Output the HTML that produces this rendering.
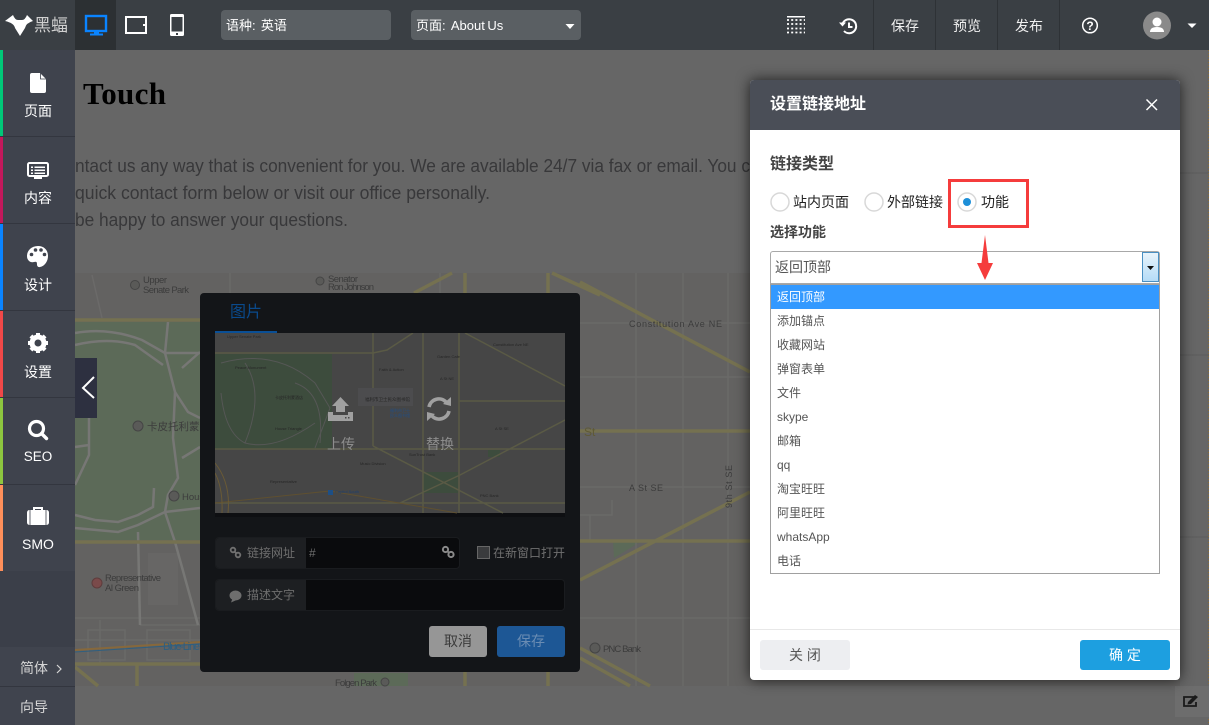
<!DOCTYPE html>
<html><head><meta charset="utf-8"><title>Editor</title>
<style>
*{box-sizing:border-box}
html,body{margin:0;padding:0;width:1209px;height:725px;overflow:hidden;background:#666;font-family:"Liberation Sans","Noto Sans CJK SC",sans-serif}
.a{position:absolute}
.t{position:absolute;white-space:nowrap;line-height:1}
#top{left:0;top:0;width:1209px;height:50px;background:#3a3f44}
.sel{background:#5a5f63;border-radius:4px;height:30px;width:170px;top:10px;color:#fff;font-size:13px;line-height:31px;padding-left:5px;white-space:pre;word-spacing:-1px}
.sep{top:0;width:1px;height:50px;background:#2e3236}
.tb{color:#f0f0f0;font-size:14px;top:19px}
.side{left:0;width:75px;background:#3f434d;border-bottom:1px solid #33363f;height:87px}
.side i{position:absolute;left:0;top:0;width:3px;height:100%}
.side span{position:absolute;left:2px;width:72px;text-align:center;color:#fff;font-size:14px;line-height:1;white-space:nowrap}
.side svg{position:absolute}
.opt{height:24px;line-height:24px;padding-left:6px;font-size:12px;color:#555;white-space:nowrap}
</style></head>
<body>
<!-- page / map -->
<svg class="a" style="left:0;top:0" width="1209" height="725" font-family="Liberation Sans,Noto Sans CJK SC,sans-serif">
<rect width="1209" height="725" fill="#666"/>
<text x="83" y="104" font-family="Liberation Serif" font-weight="bold" font-size="31" fill="#000" textLength="83">Touch</text>
<g font-size="18" fill="#38383a">
<text x="75" y="172" textLength="675" lengthAdjust="spacingAndGlyphs">ntact us any way that is convenient for you. We are available 24/7 via fax or email. You c</text>
<text x="75" y="199" textLength="415" lengthAdjust="spacingAndGlyphs">quick contact form below or visit our office personally.</text>
<text x="75" y="226" textLength="273" lengthAdjust="spacingAndGlyphs">be happy to answer your questions.</text>
</g>
<path d="M1180 173H1209M1180 355H1209M1180 537H1209" stroke="#5c5c5c"/>
<rect x="75" y="273" width="1105" height="413" fill="#636261"/>
<path d="M75 322H360V540H75Z" fill="#5c6a58"/>
<path d="M613 542H640L614 558Z" fill="#5c6a58"/>
<rect x="148" y="553" width="30" height="52" fill="#676665"/>
<g fill="none" stroke="#6b6a69" stroke-width="1.500">
<path d="M636 273V686M683 273V686M728 273V686M580 323H750M580 377H750M580 487H750M580 618H750"/>
<path d="M580 515H612V500M590 515V541M75 618H200M75 640H200M100 620V664M88 630H125V660H88ZM140 625H200M147 630H190V660H147Z"/>
<path d="M92 275L102 318M230 273V322M440 273V293"/>
</g>
<g fill="none" stroke="#777775" stroke-width="2.500">
<path d="M75 333Q108 327 142 340L165 353H200M75 345Q108 337 135 345L163 365M165 353L175 392L173 438L178 478L168 495L165 512L175 542L198 625M168 322L165 353"/>
<path d="M89 418V455L75 485M75 447L89 445M75 528L118 532L138 525L165 512L200 508M75 515L95 520L118 522L138 515L153 507L154 488M182 368L200 352M175 392L188 412L200 418M182 458L200 447M138 532L140 625"/>
</g>
<g fill="none" stroke="#757150" stroke-width="3.500">
<path d="M75 320H200M75 542H200M75 664H200M580 431H750M580 541H750M580 282L750 372M580 580L750 492M580 648L650 686M580 658L630 686M137 664V686M75 667L98 686M465 273V293M548 273V293M465 672V686M548 672V686M414 293L452 273M552 273L600 295"/>
</g>
<path d="M75 650L200 642" fill="none" stroke="#86683c" stroke-width="2"/>
<path d="M75 652L200 644" fill="none" stroke="#2f5f80" stroke-width="1"/>
<rect x="354" y="673" width="54" height="13" fill="#5c6a58"/>
<g font-size="9.500" fill="#3c3c3c">
<text x="163" y="650" fill="#2f5f80" font-size="11" textLength="37">Blue-Line</text>
<text x="143" y="283" textLength="24">Upper</text><text x="143" y="293" textLength="46">Senate Park</text>
<text x="328" y="282" textLength="30">Senator</text><text x="328" y="290" textLength="46">Ron Johnson</text>
<text x="147" y="430" font-size="10.500">卡皮托利蒙酒店</text>
<text x="182" y="500">House</text>
<text x="105" y="581" textLength="56">Representative</text><text x="105" y="591" textLength="34">Al Green</text>
<text x="629" y="327" font-size="9" textLength="93">Constitution Ave NE</text>
<text x="629" y="491" font-size="9" textLength="34">A St SE</text>
<text x="603" y="652" textLength="38">PNC Bank</text>
<text x="335" y="686" textLength="42">Folgen Park</text>
<text x="584" y="436" fill="#5f5a35" font-size="12">St</text>
<text transform="translate(732,508) rotate(-90)" font-size="9" textLength="43">9th St SE</text>
</g>
<g fill="#5a5a58" stroke="#454545" stroke-width="1"><circle cx="135" cy="285" r="4.500"/><circle cx="320" cy="281" r="4"/><circle cx="138" cy="426" r="5"/><circle cx="174" cy="496" r="5"/><circle cx="595" cy="648" r="5"/><circle cx="385" cy="682" r="4"/></g>
<circle cx="97" cy="583" r="5" fill="#7a4a4a" stroke="#5e3c3c"/>
<path d="M1208.500 50V725" stroke="#8a6a35" stroke-width="1" stroke-dasharray="1 2"/>
<rect x="1175" y="686" width="34" height="31" fill="#6d6d6d"/>
<path d="M1196 697h-12v9h12v-4" fill="none" stroke="#1a1a1a" stroke-width="1.800"/><path d="M1188 702l7-7 3 2-7 7-3.500 .5z" fill="#1a1a1a"/>
</svg>

<!-- image dialog -->
<div class="a" style="left:200px;top:293px;width:380px;height:379px;background:#131518;border-radius:4px"></div>
<div class="t" style="left:230px;top:305px;font-size:16px;color:#0a4a8c">图片</div>
<div class="a" style="left:215px;top:331px;width:62px;height:2px;background:#0a4f95"></div>
<svg class="a" style="left:215px;top:333px" width="350" height="184" font-family="Liberation Sans,Noto Sans CJK SC,sans-serif">
<rect width="350" height="184" fill="#0e0f12"/>
<rect width="350" height="180" fill="#464646"/>
<rect x="0" y="21" width="117" height="95" fill="#3d4c3d"/>
<rect x="208" y="139" width="35" height="21" fill="#3d4c3d"/>
<rect x="273" y="117" width="12" height="7" fill="#3d4c3d"/>
<g fill="none" stroke="#565756"><path d="M6 30Q60 15 100 50L115 75L100 115M6 60Q10 100 30 110Q60 118 100 90M30 30Q50 60 30 110M80 50Q110 60 105 110"/></g>
<g fill="none" stroke="#5a5a45" stroke-width="1.500"><path d="M0 20H158L172 17L198 0M0 116H350M158 0V113M208 0V180M244 0V180M250 0L350 53M244 68H350M350 87L245 142L185 170M158 113L288 180M0 170H350"/></g>
<path d="M0 170L115 158L242 180" stroke="#5f5030" fill="none"/>
<path d="M0 130Q16 150 13 180M0 140Q8 155 7 180" stroke="#6a5a35" fill="none"/>
<rect x="113" y="157" width="5" height="5" fill="#1d4f86"/>
<rect x="143" y="55" width="55" height="18" fill="#4c4c4e"/>
<g font-size="4" fill="#262626"><text x="278" y="13">Constitution Ave NE</text><text x="150" y="68" font-size="4.500">福利市卫士民众图书馆</text><text x="12" y="5">Upper Senate Park</text><text x="164" y="38">Faith &amp; Action</text><text x="222" y="25">Garden Cafe</text><text x="225" y="47">A St NE</text><text x="280" y="97">A St SE</text><text x="265" y="164">PNC Bank</text><text x="145" y="132">Music Division</text><text x="194" y="123">SunTrust Bank</text><text x="60" y="66">卡皮托利蒙酒店</text><text x="20" y="36">Peace Monument</text><text x="60" y="97">House Triangle</text><text x="55" y="150">Representative</text><text x="120" y="160" fill="#1d3f6e">Capitol South</text></g>
<g font-size="4" fill="#1f4f8a"><text x="175" y="79">福利市卫士</text><text x="175" y="84">民众图书馆</text></g>
<path d="M125.500 64L134 73H130V79H121V73H117Z" fill="#a0a0a0"/>
<path d="M113 79h5v3h15v-3h5v9H113z" fill="#a0a0a0"/><rect x="130" y="84" width="1.500" height="1.500" fill="#484848"/><rect x="133" y="84" width="1.500" height="1.500" fill="#484848"/>
<g fill="none" stroke="#a0a0a0" stroke-width="3.600"><path d="M214 74A10 10 0 0 1 231 69M234 78A10 10 0 0 1 217 83"/></g>
<path d="M228 71L236 64L236 73Z" fill="#a0a0a0"/><path d="M212 88L212 79L220 81Z" fill="#a0a0a0"/>
<text x="112" y="116" font-size="14" fill="#8d8d8d">上传</text>
<text x="211" y="116" font-size="14" fill="#8d8d8d">替换</text>
</svg>
<div class="a" style="left:215px;top:537px;width:245px;height:32px;background:#0a0b0d;border:1px solid #1a1c1f;border-radius:4px;overflow:hidden"><div style="width:90px;height:30px;background:#1d1f22"></div></div>
<div class="a" style="left:215px;top:579px;width:350px;height:32px;background:#0a0b0d;border:1px solid #1a1c1f;border-radius:4px;overflow:hidden"><div style="width:90px;height:30px;background:#1d1f22"></div></div>
<div class="t" style="left:247px;top:547px;font-size:12px;color:#6e6e6e">链接网址</div>
<div class="t" style="left:247px;top:589px;font-size:12px;color:#6e6e6e">描述文字</div>
<div class="t" style="left:309px;top:547px;font-size:12px;color:#6e6e6e">#</div>
<svg class="a" style="left:229px;top:546px" width="13" height="13" fill="none" stroke="#707070" stroke-width="1.800"><circle cx="4" cy="4" r="2.300"/><circle cx="9" cy="9" r="2.300"/><path d="M5.500 5.500l2 2"/></svg>
<svg class="a" style="left:441px;top:545px" width="15" height="14" fill="none" stroke="#8a8a8a" stroke-width="2"><circle cx="4.500" cy="4.500" r="2.600"/><circle cx="10" cy="9.500" r="2.600"/><path d="M6.500 6.500l2 1.500"/></svg>
<svg class="a" style="left:229px;top:590px" width="13" height="13"><ellipse cx="6.500" cy="5.500" rx="6" ry="5" fill="#6e6e6e"/><path d="M2 12.500l1.500-4 3 2z" fill="#6e6e6e"/></svg>
<div class="a" style="left:477px;top:546px;width:13px;height:13px;background:#3a3b3d;border:1px solid #666"></div>
<div class="t" style="left:493px;top:547px;font-size:12px;color:#707070">在新窗口打开</div>
<div class="a" style="left:429px;top:626px;width:58px;height:31px;background:#969696;border-radius:3px;color:#3c3c3c;font-size:14px;line-height:31px;text-align:center">取消</div>
<div class="a" style="left:497px;top:626px;width:68px;height:31px;background:#1d5795;border-radius:3px;color:#6a8cb3;font-size:14px;line-height:31px;text-align:center">保存</div>

<!-- collapse tab -->
<div class="a" style="left:75px;top:358px;width:22px;height:60px;background:#2d3040"></div>
<svg class="a" style="left:75px;top:358px" width="22" height="60" fill="none" stroke="#fff" stroke-width="2"><path d="M19 19L8 30l11 10"/></svg>

<!-- top bar -->
<div class="a" id="top"></div>
<div class="a" style="left:75px;top:0;width:41px;height:50px;background:#2c3033"></div>
<svg class="a" style="left:0;top:0" width="200" height="50">
<path d="M5 21L13 15Q15 20 18 20L22 20Q25 20 27 15L33 21Q26 23 25 28L20 36L15 28Q14 23 5 21Z" fill="#fff"/>
<g fill="none" stroke="#0a84ff"><rect x="86" y="16" width="20" height="15" stroke-width="2.400"/></g>
<rect x="94" y="32" width="5" height="2" fill="#0a84ff"/><rect x="90" y="33.500" width="13" height="2" fill="#0a84ff"/>
<rect x="126" y="17" width="20" height="16" fill="none" stroke="#fff" stroke-width="2"/><rect x="143" y="24" width="2" height="2" fill="#fff"/>
<path d="M171.500 14h11a1.500 1.500 0 0 1 1.500 1.500v19a1.500 1.500 0 0 1-1.500 1.500h-11a1.500 1.500 0 0 1-1.500-1.500v-19a1.500 1.500 0 0 1 1.500-1.500z" fill="#fff"/><rect x="171.500" y="17" width="11" height="14.500" fill="#3a3f44"/><rect x="176" y="33" width="2" height="2" fill="#3a3f44"/>
</svg>
<div class="t" style="left:34px;top:17px;font-size:17px;color:#d0d0d0">黑蝠</div>
<div class="a sel" style="left:221px">语种:  英语</div>
<div class="a sel" style="left:411px">页面:  About Us</div>
<svg class="a" style="left:560px;top:20px" width="16" height="10"><path d="M5.500 4h9l-4.500 5z" fill="#fff"/></svg>
<div class="a sep" style="left:873px"></div><div class="a sep" style="left:935px"></div><div class="a sep" style="left:997px"></div><div class="a sep" style="left:1059px"></div>
<div class="t tb" style="left:891px">保存</div><div class="t tb" style="left:953px">预览</div><div class="t tb" style="left:1015px">发布</div>
<svg class="a" style="left:780px;top:10px" width="90" height="30">
<rect x="7" y="6" width="18" height="1.500" fill="#fff"/>
<g fill="none" stroke="#fff" stroke-width="1.800" stroke-dasharray="2 2.200"><path d="M7 10h18M7 14h18M7 18.500h18M7 22.500h18"/></g>
<g fill="none" stroke="#fff" stroke-width="2"><path d="M62.500 14A7 7 0 1 1 64 21"/><path d="M69 12.500v4.500h3.500"/></g>
<path d="M59 12.500h7l-3.500 4z" fill="#fff"/>
</svg>
<svg class="a" style="left:1080px;top:15px" width="20" height="20"><circle cx="10" cy="10.500" r="7.300" fill="none" stroke="#fff" stroke-width="1.500"/><text x="10" y="15" text-anchor="middle" font-size="12" font-weight="bold" fill="#fff" font-family="Liberation Sans">?</text></svg>
<svg class="a" style="left:1143px;top:11px" width="58" height="30"><circle cx="14" cy="14.500" r="14" fill="#8a8a8a"/><circle cx="14" cy="11" r="4.500" fill="#fff"/><path d="M7 21q0-5 7-5t7 5z" fill="#fff"/><path d="M44.500 12.500h9l-4.500 4.500z" fill="#fff"/></svg>

<!-- sidebar -->
<div class="a" style="left:0;top:50px;width:75px;height:675px;background:#3b3f49"></div>
<div class="a side" style="top:50px"><i style="background:#00c878"></i>
<svg style="left:29px;top:22px" width="18" height="22"><path d="M3 1h8l6 6v12a2 2 0 0 1-2 2H3a2 2 0 0 1-2-2V3a2 2 0 0 1 2-2z" fill="#fff"/><path d="M11.500 1v6h5.500" fill="none" stroke="#3f434d" stroke-width=".8"/></svg>
<span style="top:54px">页面</span></div>
<div class="a side" style="top:137px"><i style="background:#c2185b"></i>
<svg style="left:26px;top:24px" width="24" height="20"><rect x="2" y="2" width="20" height="13" rx="1.500" fill="none" stroke="#fff" stroke-width="2"/><path d="M5 5.500h2v1.500H5zm3.500 0H19v1.500H8.500zM5 8.500h2v1.500H5zm3.500 0H19v1.500H8.500zM5 11.500h2v1.500H5zm3.500 0H19v1.500H8.500zM8 16h8v2H8z" fill="#fff"/></svg>
<span style="top:54px">内容</span></div>
<div class="a side" style="top:224px"><i style="background:#0a84ff"></i>
<svg style="left:26px;top:21px" width="24" height="24"><path d="M12 1C5 1 1 6 1 11c0 5 4 7 7 6 3-1 3 1 3 2.500s1 3 3 2.500c5-1 8-6 8-11 0-6-4-10-10-10z" fill="#fff"/><circle cx="5.500" cy="9.500" r="1.800" fill="#3f434d"/><circle cx="9.500" cy="5" r="1.800" fill="#3f434d"/><circle cx="15" cy="5" r="1.800" fill="#3f434d"/><circle cx="18.500" cy="9.500" r="1.800" fill="#3f434d"/></svg>
<span style="top:54px">设计</span></div>
<div class="a side" style="top:311px"><i style="background:#f04848"></i>
<svg style="left:26px;top:20px" width="24" height="24"><g fill="none" stroke="#fff"><circle cx="12" cy="12" r="6" stroke-width="5"/><path d="M12 2v4M12 18v4M2 12h4M18 12h4M4.900 4.900l2.800 2.800M16.300 16.300l2.800 2.800M19.100 4.900l-2.800 2.800M7.700 16.300l-2.800 2.800" stroke-width="4"/></g></svg>
<span style="top:54px">设置</span></div>
<div class="a side" style="top:398px"><i style="background:#8dc63f"></i>
<svg style="left:26px;top:20px" width="24" height="24"><circle cx="10.500" cy="10.500" r="7" fill="none" stroke="#fff" stroke-width="3.200"/><path d="M15.500 15.500L20.500 20.500" stroke="#fff" stroke-width="3.400" stroke-linecap="round"/></svg>
<span style="top:52px;font-size:13.500px">SEO</span></div>
<div class="a side" style="top:485px;border-bottom:0;height:86px"><i style="background:#ff8f5a"></i>
<svg style="left:26px;top:20px" width="24" height="24"><path d="M8 5V3h8V5" fill="none" stroke="#fff" stroke-width="2"/><rect x="1" y="5" width="22" height="15" rx="2.500" fill="#fff"/><path d="M4 5v15M20 5v15" stroke="#3f434d" stroke-width=".8"/></svg>
<span style="top:52px">SMO</span></div>
<div class="a" style="left:0;top:647px;width:75px;height:40px;background:#40444e;border-bottom:1px solid #33363f"></div>
<div class="a" style="left:0;top:687px;width:75px;height:38px;background:#40444e"></div>
<div class="t" style="left:20px;top:661px;font-size:14px;color:#d5d5d5">简体</div>
<svg class="a" style="left:55px;top:664px" width="8" height="10" fill="none" stroke="#d5d5d5" stroke-width="1.200"><path d="M2 1l4 4-4 4"/></svg>
<div class="t" style="left:20px;top:700px;font-size:14px;color:#d5d5d5">向导</div>

<!-- link dialog -->
<div class="a" style="left:750px;top:80px;width:430px;height:600px;background:#fff;border-radius:4px;box-shadow:0 0 14px rgba(0,0,0,.7);overflow:hidden">
<div class="a" style="left:0;top:0;width:430px;height:50px;background:#4a4e57"></div>
<div class="a" style="left:0;top:549px;width:430px;height:1px;background:#e8e8e8"></div>
</div>
<div class="t" style="left:770px;top:97px;font-size:16px;color:#fff;font-weight:bold">设置链接地址</div>
<svg class="a" style="left:1145px;top:98px" width="14" height="14" stroke="#fff" stroke-width="1.500"><path d="M1.500 1.500l10.500 10.500M12 1.500L1.500 12"/></svg>
<div class="t" style="left:770px;top:157px;font-size:16px;color:#444;font-weight:bold">链接类型</div>
<svg class="a" style="left:768px;top:190px" width="212" height="24" fill="#fff" stroke="#d8d8d8" stroke-width="1.500">
<circle cx="12" cy="12" r="9"/><circle cx="106" cy="12" r="9"/><circle cx="199" cy="12" r="9"/><circle cx="199" cy="12" r="4" fill="#1d8fd8" stroke="none"/>
</svg>
<div class="t" style="left:793px;top:195px;font-size:14px;color:#222">站内页面</div>
<div class="t" style="left:887px;top:195px;font-size:14px;color:#222">外部链接</div>
<div class="t" style="left:981px;top:195px;font-size:14px;color:#222">功能</div>
<div class="a" style="left:948px;top:179px;width:81px;height:49px;border:3px solid #f53c3c"></div>
<div class="t" style="left:770px;top:225px;font-size:14px;color:#444;font-weight:bold">选择功能</div>
<div class="a" style="left:770px;top:251px;width:390px;height:33px;border:1px solid #a8a8a8;border-radius:3px 3px 0 0;background:#fff;color:#555;font-size:14px;line-height:31px;padding-left:4px">返回顶部</div>
<div class="a" style="left:1142px;top:252px;width:17px;height:30px;border:1px solid #4a8fc2;background:linear-gradient(#e8f3fb,#b5dcf7)"></div>
<svg class="a" style="left:1142px;top:252px" width="16" height="31"><path d="M5 14h7l-3.500 4z" fill="#111"/></svg>
<svg class="a" style="left:975px;top:234px" width="20" height="48"><path d="M10 1L13.500 29L18 29L10 46L2 29L6.500 29Z" fill="#f53c3c"/></svg>
<div class="a" style="left:770px;top:284px;width:390px;height:290px;border:1px solid #a0a0a0;background:#fff">
<div class="opt" style="background:#3399ff;color:#fff">返回顶部</div>
<div class="opt">添加锚点</div><div class="opt">收藏网站</div><div class="opt">弹窗表单</div><div class="opt">文件</div><div class="opt">skype</div><div class="opt">邮箱</div><div class="opt">qq</div><div class="opt">淘宝旺旺</div><div class="opt">阿里旺旺</div><div class="opt">whatsApp</div><div class="opt">电话</div>
</div>
<div class="a" style="left:760px;top:640px;width:90px;height:30px;background:#edeef1;border-radius:3px;color:#555;font-size:14px;line-height:31px;text-align:center">关 闭</div>
<div class="a" style="left:1080px;top:640px;width:90px;height:30px;background:#1d9fe0;border-radius:3px;color:#fff;font-size:14px;line-height:31px;text-align:center">确 定</div>
</body></html>
